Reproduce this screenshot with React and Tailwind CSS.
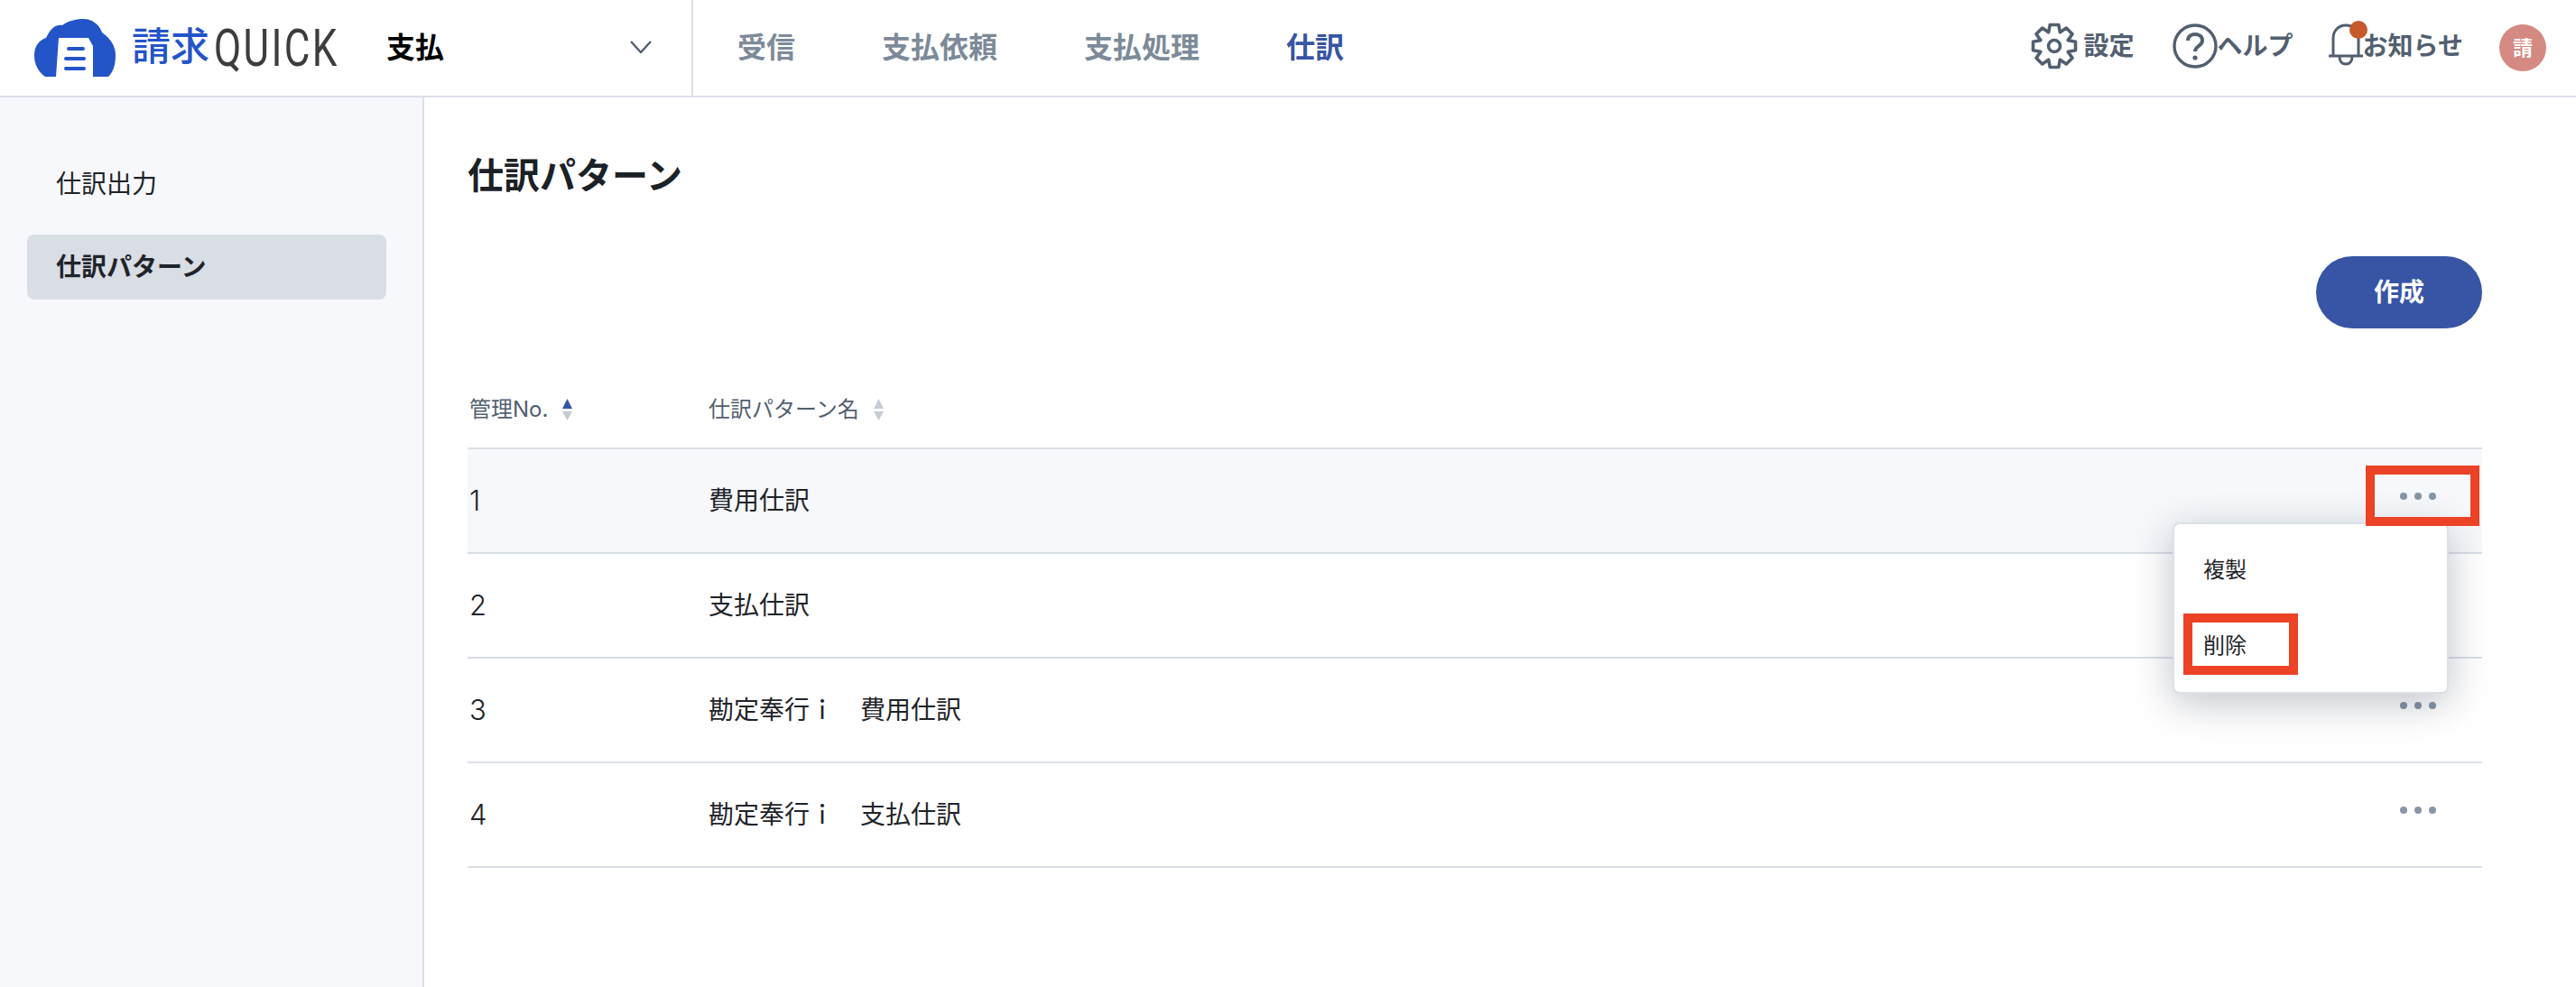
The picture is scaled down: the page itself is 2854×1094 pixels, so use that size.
const rows = [
  { no: '1', name: '費用仕訳', active: true },
  { no: '2', name: '支払仕訳' },
  { no: '3', name: '勘定奉行ｉ　費用仕訳' },
  { no: '4', name: '勘定奉行ｉ　支払仕訳' },
];

// eight teeth outline, centre 26,26
function gearPath() {
  const pts = [];
  for (let i = 0; i < 8; i++) {
    const a = (i * Math.PI) / 4;
    [[-0.39, 16.5], [-0.2, 24], [0.2, 24], [0.39, 16.5]].forEach(([d, r]) => {
      pts.push(`${(26 + r * Math.cos(a + d)).toFixed(1)} ${(26 + r * Math.sin(a + d)).toFixed(1)}`);
    });
  }
  return `M${pts.join('L')}Z`;
}

function GearIcon() {
  return (
    <svg width="52" height="52" viewBox="0 0 52 52" fill="none" stroke="#525f70" strokeWidth="3.6" strokeLinejoin="round">
      <path d={gearPath()} />
      <circle cx="26" cy="26" r="6.5" />
    </svg>
  );
}

function HelpIcon() {
  return (
    <svg width="50" height="52" viewBox="0 0 50 52" fill="none" stroke="#525f70" strokeWidth="3.4">
      <circle cx="25" cy="26" r="23" />
      <path d="M17 20C17 15 21 13 25 13C29 13 33 15 33 20C33 26 25 26 25 32" strokeWidth="4" />
      <circle cx="25" cy="39" r="2.6" fill="#525f70" stroke="none" />
    </svg>
  );
}

function Logo() {
  return (
    <div className="flex items-center w-[428px] pl-[38px] h-full">
      <svg width="90" height="64" viewBox="0 0 90 64" className="shrink-0">
        <path
          d="M12 64C4 58 0 50 0 40C0 30 6 23 13 21C18 11 23 6 31 7C38 2 46 0 54 0C64 0 72 6 75 15C84 21 90 30 90 40C90 50 88 58 82 64Z"
          fill="#2354c8"
        />
        <path d="M24 64L27 21H60L65 30V64Z" fill="#fff" />
        <path d="M38 33H54M35 44H55M35 55H55" stroke="#2354c8" strokeWidth="4" strokeLinecap="round" />
      </svg>
      <span className="ml-[18px] text-[43px] leading-none font-medium text-[#2354c8] shrink-0 w-[91px] mt-[-3px]">請求</span>
      <span className="w-[134px] shrink-0 text-[58px] leading-none font-['Roboto',sans-serif] text-[#3d3d3d] tracking-[3px] origin-left scale-x-[0.76] mt-[-1px]">
        QUICK
      </span>
    </div>
  );
}

function Header() {
  return (
    <header className="flex h-[108px] border-b-2 border-[#dcdfe8] bg-white">
      <Logo />
      <div className="flex w-[340px] items-center justify-between pr-[44px] border-r-2 border-[#dcdfe8]">
        <span className="text-[32px] font-bold text-black mt-[-1px]">支払</span>
        <svg width="24" height="14" viewBox="0 0 24 14" fill="none" stroke="#525f70" strokeWidth="2.4" className="mt-[-2px]">
          <path d="M1 1L12 13L23 1" />
        </svg>
      </div>
      <nav className="flex items-center gap-[96px] pl-[49px] text-[32px] font-bold text-[#7d8a99]">
        <span>受信</span>
        <span>支払依頼</span>
        <span>支払処理</span>
        <span className="text-[#3755a5]">仕訳</span>
      </nav>
      <div className="ml-auto flex items-center pr-[33px] pb-[4px] text-[28px] font-bold text-[#525f70]">
        <GearIcon />
        <span className="ml-[7px]">設定</span>
        <div className="ml-[42px]">
          <HelpIcon />
        </div>
        <span className="whitespace-nowrap">ヘルプ</span>
        <div className="relative ml-[39px] mt-[-4px] w-[38px] h-[48px]">
          <svg width="38" height="48" viewBox="0 0 38 48" fill="none" stroke="#525f70" strokeWidth="3">
            <path d="M5 36V17C5 9 11 3 19 3C27 3 33 9 33 17V36" />
            <path d="M0 37H38" />
            <path d="M12 38C12 43 15 46 19 46C23 46 26 43 26 38" />
          </svg>
          <span className="absolute top-[-2px] right-[-5px] w-[20px] h-[20px] rounded-full bg-[#c65a2b]" />
        </div>
        <span className="whitespace-nowrap">お知らせ</span>
        <span className="ml-[40px] mt-[4px] flex items-center justify-center w-[52px] h-[52px] rounded-full bg-[#d48a82] text-[22px] text-white">
          請
        </span>
      </div>
    </header>
  );
}

function Sidebar() {
  return (
    <aside className="w-[470px] shrink-0 border-r-2 border-[#dcdfe8] bg-[#f7f8fc] px-[30px] pt-[66px] text-[28px] text-[#1f2429]">
      <div className="flex h-[60px] items-center pl-[32px]">仕訳出力</div>
      <div className="mt-[26px] flex h-[72px] w-[398px] items-center rounded-lg bg-[#d9dde4] pl-[32px] font-bold">
        仕訳パターン
      </div>
    </aside>
  );
}

function SortIcon({ active }) {
  return (
    <svg width="11" height="24" viewBox="0 0 11 24" className="ml-[16px]">
      <path d="M5.5 0L11 11H0Z" fill={active ? '#3755a5' : '#c6ccd6'} />
      <path d="M0 14H11L5.5 24Z" fill="#c6ccd6" />
    </svg>
  );
}

function Dots() {
  return (
    <div className="flex gap-[8px] mr-[51px] mb-[10px]">
      <span className="w-2 h-2 rounded-full bg-[#8895a7]" />
      <span className="w-2 h-2 rounded-full bg-[#8895a7]" />
      <span className="w-2 h-2 rounded-full bg-[#8895a7]" />
    </div>
  );
}

function Menu() {
  return (
    <div className="absolute right-[37px] top-[81px] z-10 w-[306px] h-[190px] pt-[9px] rounded-lg border-2 border-[#dce0e8] bg-white text-[24px] text-[#1f2429] shadow-[0_10px_44px_rgba(30,40,60,0.28)]">
      <div className="flex h-[84px] items-center pl-[32px]">複製</div>
      <div className="flex h-[84px] items-center pl-[32px]">削除</div>
      <div className="absolute left-[10px] top-[99px] w-[127px] h-[68px] border-[10px] border-[#ec4226]" />
    </div>
  );
}

function Table() {
  return (
    <div>
      <div className="flex h-[86px] items-center border-b-2 border-[#d9dee6] text-[24px] text-[#525f70]">
        <div className="flex w-[267px] items-center pl-[2px]">
          管理No.
          <SortIcon active />
        </div>
        <div className="flex items-center">
          仕訳パターン名
          <SortIcon />
        </div>
      </div>
      {rows.map(r => (
        <div
          key={r.no}
          className={`relative flex h-[116px] items-center border-b-2 border-[#d9dee6] text-[28px] text-[#1f2429] ${r.active ? 'bg-[#f6f8fb]' : ''}`}
        >
          <div className="w-[267px] pl-[2px] text-[31px] font-light">{r.no}</div>
          <div>{r.name}</div>
          <div className="ml-auto">
            <Dots />
          </div>
          {r.active && (
            <>
              <Menu />
              <div className="absolute right-[3px] top-[18px] z-20 w-[126px] h-[67px] border-[10px] border-[#ec4226]" />
            </>
          )}
        </div>
      ))}
    </div>
  );
}

export default function App() {
  return (
    <div className="h-[1094px] w-[2854px] overflow-hidden bg-white font-['Inter','Noto_Sans_CJK_JP',sans-serif]">
      <Header />
      <div className="flex h-[986px]">
        <Sidebar />
        <main className="flex-1 pl-[48px] pr-[104px] pt-[57px]">
          <h1 className="h-[60px] text-[40px] leading-[60px] font-bold text-[#1b2127]">仕訳パターン</h1>
          <div className="mt-[59px] mb-[48px] flex justify-end">
            <button className="flex h-[80px] w-[184px] items-center justify-center rounded-full bg-[#3855a5] text-[28px] font-bold text-white">
              作成
            </button>
          </div>
          <Table />
        </main>
      </div>
    </div>
  );
}
